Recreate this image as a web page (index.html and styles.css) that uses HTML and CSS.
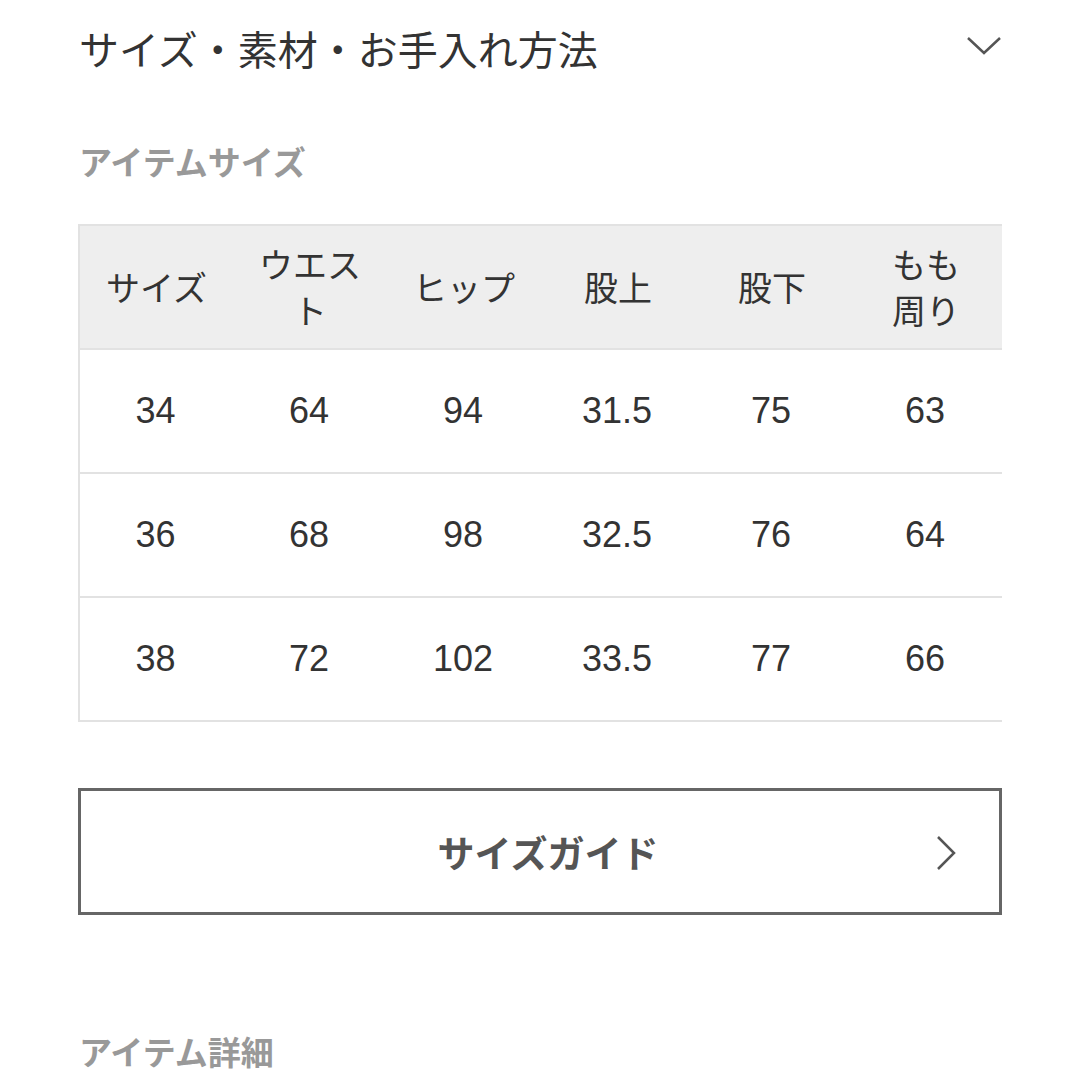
FILE: index.html
```html
<!DOCTYPE html>
<html lang="ja">
<head>
<meta charset="utf-8">
<link rel="stylesheet" href="styles.css">
</head>
<body>
<div class="page">
  <div class="acc-head">
    <span class="acc-title">サイズ・素材・お手入れ方法</span>
    <svg class="chev-down" width="36" height="20" viewBox="0 0 36 20"><polyline points="2,2 18,17 34,2" fill="none" stroke="#555" stroke-width="2.5"/></svg>
  </div>
  <h2 class="sec-title first">アイテムサイズ</h2>
  <div class="table-wrap">
    <table class="size-table">
      <thead>
        <tr><th>サイズ</th><th>ウエスト</th><th>ヒップ</th><th>股上</th><th>股下</th><th>もも<br>周り</th></tr>
      </thead>
      <tbody>
        <tr><td>34</td><td>64</td><td>94</td><td>31.5</td><td>75</td><td>63</td></tr>
        <tr><td>36</td><td>68</td><td>98</td><td>32.5</td><td>76</td><td>64</td></tr>
        <tr><td>38</td><td>72</td><td>102</td><td>33.5</td><td>77</td><td>66</td></tr>
      </tbody>
    </table>
  </div>
  <a class="guide-btn">
    <span class="guide-label">サイズガイド</span>
    <svg class="chev-right" width="22" height="36" viewBox="0 0 22 36"><polyline points="3,2 19,18 3,34" fill="none" stroke="#555" stroke-width="2.5"/></svg>
  </a>
  <h2 class="sec-title">アイテム詳細</h2>
</div>
</body>
</html>
```
FILE: styles.css
```css
html, body {
  margin: 0;
  padding: 0;
  background: #fff;
}
body {
  font-family: "Liberation Sans", "Noto Sans CJK JP", sans-serif;
  color: #333;
}
.page {
  width: 924px;
  margin-left: 78px;
}
.acc-head {
  height: 96px;
  display: flex;
  align-items: center;
  justify-content: space-between;
}
.acc-title {
  font-family: "Noto Sans CJK JP", sans-serif;
  font-size: 40px;
  color: #333;
  margin-left: 1px;
}
.chev-down {
  margin-top: -4px;
}
.sec-title {
  font-family: "Noto Sans CJK JP", sans-serif;
  font-weight: 700;
  font-size: 33px;
  color: #999;
  margin: 0;
  height: 48px;
  line-height: 48px;
  margin-left: 1px;
}
.sec-title.first {
  margin-top: 41px;
  margin-bottom: 39px;
}
.table-wrap {
  overflow: hidden;
  width: 924px;
}
.size-table {
  border-collapse: collapse;
  table-layout: fixed;
  width: 924px;
  border-left: 2px solid #e2e2e2;
}
.size-table th, .size-table td {
  width: 154px;
  text-align: center;
  padding: 0 14px;
  box-sizing: border-box;
}
.size-table th {
  font-family: "Noto Sans CJK JP", sans-serif;
  font-weight: 400;
  font-size: 34px;
  line-height: 46px;
  color: #333;
  background: #eeeeee;
  height: 124px;
  border-top: 2px solid #e2e2e2;
  border-bottom: 2px solid #e2e2e2;
}
.size-table td {
  font-family: "Liberation Sans", sans-serif;
  font-size: 36px;
  color: #333;
  height: 124px;
  border-bottom: 2px solid #e2e2e2;
  padding-right: 16px;
}
.guide-btn {
  margin-top: 66px;
  height: 127px;
  box-sizing: border-box;
  border: 3px solid #666;
  display: flex;
  align-items: center;
  justify-content: center;
  padding-left: 16px;
  position: relative;
}
.guide-label {
  font-family: "Noto Sans CJK JP", sans-serif;
  font-weight: 700;
  font-size: 37px;
  color: #555;
}
.chev-right {
  position: absolute;
  right: 42px;
  top: 44px;
}
.guide-btn + .sec-title {
  margin-top: 112px;
}
```
